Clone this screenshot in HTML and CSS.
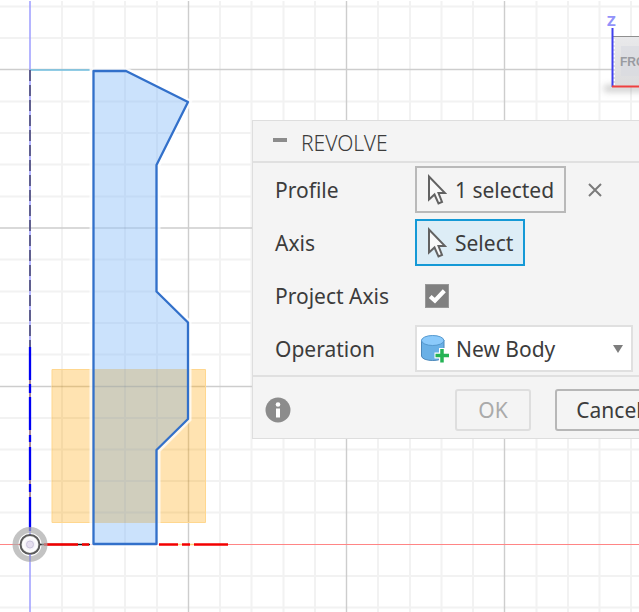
FILE: index.html
```html
<!DOCTYPE html>
<html lang="en">
<head>
<meta charset="utf-8">
<title>Revolve</title>
<link rel="stylesheet" href="styles.css">
</head>
<body>
<main class="viewport">
  <svg class="scene" aria-hidden="true">
    <defs>
      <linearGradient id="cube" x1="0" y1="0" x2="0" y2="1"><stop offset="0" stop-color="#e9e9eb"/><stop offset="1" stop-color="#dcdcdd"/></linearGradient>
      <filter id="soft" x="-20%" y="-200%" width="140%" height="500%"><feGaussianBlur stdDeviation="3"/></filter>
      <radialGradient id="origin"><stop offset="0" stop-color="#d9d4e8"/><stop offset=".3" stop-color="#eeeaf4"/><stop offset=".75" stop-color="#fff"/><stop offset="1" stop-color="#ccc"/></radialGradient>
    </defs>
    <path class="minor" d="M62 1V612M93.5 1V612M125 1V612M157 1V612M220 1V612M251.500 1V612M283.500 1V612M315 1V612M378 1V612M410 1V612M441.500 1V612M473 1V612M536.500 1V612M568 1V612M599.500 1V612M631 1V612"/>
    <path class="minor" d="M0 6.500H639M0 38H639M0 101.500H639M0 133H639M0 164.500H639M0 196.500H639M0 259.500H639M0 291.500H639M0 323H639M0 354.500H639M0 418H639M0 449.500H639M0 481H639M0 512.500H639M0 576H639M0 607.500H639"/>
    <path class="major" d="M188.500 1V612M346.500 1V612M504.500 1V612M0 69.500H639M0 228H639M0 386.500H639"/>
    <path d="M30 1V612" stroke="#9d9dff" stroke-width="1.500"/>
    <path d="M0 544.500H639" stroke="#ff8585"/>
    <path d="M30 70H90" stroke="#70bfe0" stroke-width="1.600"/>
    <path d="M30 70V348" stroke="#51517c" stroke-width="1.700" stroke-dasharray="11 4"/>
    <path d="M52 369.500H205.500V522.500H52Z" fill="#ffe3b1" stroke="#ffd78f"/>
    <path class="minor over" d="M62 370V522M93.500 370V522M125 370V522M157 370V522M52 418H205M52 449.500H205M52 481H205M52 512.500H205"/>
    <path class="major over" d="M188.500 370V522M52 386.500H205"/>
    <path d="M93 71H126L188 102L157 165V291.500L188 322.500V419L157 450V544H93Z" fill="none" stroke="#fff" stroke-opacity=".75" stroke-width="7"/>
    <path d="M93 71H126L188 102L157 165V291.500L188 322.500V419L157 450V544H93Z" fill="#cbe2fc"/>
    <path d="M93 369H188V419L157 450V523H93Z" fill="#d0cebd"/>
    <path d="M125 72V543M157 86V543M93 101.500H188M93 133H172M93 164.500H157M93 196.500H157M93 259.500H157M93 291.500H157M93 323H188M93 354.500H188M93 418H188M93 449.500H157M93 481H157M93 512.500H157" stroke="#6080a0" stroke-opacity=".08" stroke-width="2"/>
    <path d="M93 228H157M93 386.500H188" stroke="#536b80" stroke-opacity=".2" stroke-width="1.500"/>
    <path d="M30 347V380M30 384V393M30 397V430M30 435V442M30 447V480M30 484V492M30 497V531" stroke="#0000f5" stroke-width="2.300"/>
    <path d="M30 380V384M30 393V397M30 430V435M30 442V447M30 480V484M30 492V497" stroke="#a97976" stroke-width="1.500"/>
    <path d="M38 544.500H90" stroke="#151515" stroke-width="1.600"/>
    <path d="M44 544.500H78M82 544.500H89M159 544.500H178M182 544.500H190M194 544.500H228" stroke="#f30000" stroke-width="2.300"/>
    <path d="M178 544.500H182M190 544.500H194" stroke="#ffd27d" stroke-width="1.500"/>
    <path d="M93.500 71H126L188 102L156.500 165V291.500L188 322.500V419L156.500 450V544H93.500Z" fill="none" stroke="#3270ca" stroke-width="2.300" stroke-linejoin="round"/>
    <circle cx="30" cy="544.500" r="14.500" fill="none" stroke="#a9a9a9" stroke-opacity=".7" stroke-width="6"/>
    <circle cx="30" cy="544.500" r="9.500" fill="url(#origin)" stroke="#5b5b5b" stroke-width="2"/>
    <path d="M30 554V561" stroke="#8989df"/><circle cx="30" cy="544.500" r="3.500" fill="#e5deee" stroke="#cbc5dc"/>
    <path d="M604 85H650V92H604Z" fill="#777" opacity=".35" filter="url(#soft)"/>
    <path d="M613 37H660V87H613Z" fill="url(#cube)"/>
    <path d="M621 46H660V76H621Z" fill="#d7d9e0" opacity=".55"/>
    <path d="M613 36.500H660" stroke="#8f8f8f"/>
    <path d="M614 39V85" stroke="#fff" stroke-width="2" stroke-dasharray="2 2"/>
    <path d="M612.500 28V87" stroke="#4040ee" stroke-width="2"/>
    <path d="M612 86.500H660" stroke="#ef4040" stroke-width="2"/>
    <text class="axis-name" x="607" y="26">Z</text>
    <text class="cube-name" x="620" y="66">FRONT</text>
  </svg>

  <form class="panel">
    <header class="panel-head">
      <button class="collapse" type="button" aria-label="Collapse"></button>
      <h1 class="title">REVOLVE</h1>
    </header>
    <div class="fields">
      <div class="row">
        <label for="profile">Profile</label>
        <div class="control">
          <button class="pick" id="profile" type="button">
            <svg class="arrow" viewBox="0 0 20 32" aria-hidden="true"><path d="M2 2.500V25.500L7.500 20.500L11.500 29.500L15 28L11.500 19H18Z"/></svg>1 selected
          </button>
          <button class="clear" type="button" aria-label="Clear selection">
            <svg viewBox="0 0 14 14" aria-hidden="true"><path d="M1 1L13 13M13 1L1 13"/></svg>
          </button>
        </div>
      </div>
      <div class="row">
        <label for="axis">Axis</label>
        <div class="control">
          <button class="pick active" id="axis" type="button">
            <svg class="arrow" viewBox="0 0 20 32" aria-hidden="true"><path d="M2 2.500V25.500L7.500 20.500L11.500 29.500L15 28L11.500 19H18Z"/></svg>Select
          </button>
        </div>
      </div>
      <div class="row">
        <label for="project">Project Axis</label>
        <div class="control">
          <span class="tick"><input id="project" type="checkbox" checked><svg viewBox="0 0 23 23" aria-hidden="true"><path d="M5 12L9.500 16L18.500 6.500"/></svg></span>
        </div>
      </div>
      <div class="row">
        <label for="operation">Operation</label>
        <div class="control">
          <div class="choice">
            <select id="operation"><option>New Body</option></select>
            <svg class="body-icon" viewBox="0 0 30 30" aria-hidden="true">
              <path d="M1.500 6V22C2 28 23.500 28 24 22V6Z" fill="#69b0e6" stroke="#4d89bb"/>
              <ellipse cx="12.700" cy="6.500" rx="11.200" ry="5" fill="#8bcafb" stroke="#5599cf"/>
              <path d="M22 14V29M14.500 21.500H29.500" stroke="#fff" stroke-width="6"/>
              <path d="M22 15V28.500M15.500 21.500H29" stroke="#25b355" stroke-width="3.500"/>
            </svg>
            <svg class="caret" viewBox="0 0 10 8" aria-hidden="true"><path d="M0 0H10L5 8Z"/></svg>
          </div>
        </div>
      </div>
    </div>
    <footer class="actions">
      <button class="info" type="button" aria-label="Information">
        <svg viewBox="0 0 26 26" aria-hidden="true"><circle cx="13" cy="13" r="12.500" fill="#8c8c8c"/><circle cx="13" cy="7.500" r="2.300" fill="#fff"/><path d="M11 11.500H15V20.500H11Z" fill="#fff"/></svg>
      </button>
      <button class="action" type="submit" disabled>OK</button>
      <button class="action cancel" type="button">Cancel</button>
    </footer>
  </form>
</main>
</body>
</html>
```

FILE: styles.css
```css
* { box-sizing: border-box; }

body {
  margin: 0;
  background: #fff;
  color: #3c3c3c;
  font: 21px/28px "Noto Sans", sans-serif;
}

button, select, input { margin: 0; font: inherit; color: inherit; }
button { padding: 0; border: 0; background: none; }
svg { display: block; flex: none; }

.viewport { position: relative; min-height: 100vh; overflow: hidden; }
.scene { position: absolute; inset: 0; width: 100%; height: 100%; }
.minor { stroke: #f2f2f2; stroke-width: 2; fill: none; }
.major { stroke: #cdcdcd; stroke-width: 1.4; fill: none; }
.over { stroke: #806020; stroke-opacity: .08; }
.major.over { stroke-opacity: .25; }
.axis-name { font: 700 15px "Noto Sans", sans-serif; fill: #9292fa; }
.cube-name { font: 700 12px "Liberation Sans", sans-serif; fill: #999ba1; }

.panel {
  position: absolute;
  top: 120px;
  left: 252px;
  min-width: 436px;
  border: 1px solid #dedede;
  background: #f4f4f4;
}

.panel-head {
  display: flex;
  align-items: center;
  gap: 14px;
  height: 42px;
  padding: 4px 20px 0;
  border-bottom: 2px solid #e0e0e0;
}
.collapse { width: 14px; height: 4px; margin-bottom: 6px; background: #8c8c8c; }
.title { margin: 0; font-size: 21px; font-weight: 300; }

.fields {
  display: grid;
  gap: 6px;
  padding: 3px 20px 3px 22px;
  border-bottom: 2px solid #e0e0e0;
}
.row { display: grid; grid-template-columns: 140px 1fr; align-items: center; min-height: 47px; }
.control { display: flex; align-items: center; }

.pick {
  display: flex;
  align-items: center;
  gap: 8px;
  height: 47px;
  padding: 0 10px;
  border: 2px solid #b9b9b9;
}
.pick.active { border-color: #1499d6; background: #ddedf6; }
.arrow { width: 20px; height: 32px; fill: #f8f8f8; stroke: #626262; stroke-width: 2; }

.clear { margin-left: 22px; }
.clear svg { width: 14px; height: 14px; fill: none; stroke: #7b7b7b; stroke-width: 2; }

.tick { display: grid; margin-left: 10px; }
.tick input, .tick svg { grid-area: 1 / 1; width: 24px; height: 24px; }
.tick input { appearance: none; border: 1px solid #989898; background: #808080; }
.tick svg { fill: none; stroke: #fff; stroke-width: 4; pointer-events: none; }

.choice { display: grid; grid-template-columns: 218px; align-items: center; }
.choice > * { grid-area: 1 / 1; }
.choice select {
  appearance: none;
  height: 47px;
  padding: 0 39px;
  border: 2px solid #e0e0e0;
  border-radius: 0;
  background: #fff;
}
.choice svg { pointer-events: none; }
.body-icon { width: 30px; height: 30px; margin-left: 5px; }
.caret { justify-self: end; width: 10px; height: 8px; margin-right: 10px; fill: #7d7d7d; }

.actions { display: flex; align-items: center; height: 61px; padding: 4px 24px 0 12px; }
.info { margin-right: auto; }
.info svg { width: 26px; height: 26px; }
.action { width: 76px; height: 42px; border: 2px solid #b7b7b7; border-radius: 3px; }
.action:disabled { border-color: #dedede; color: #aaa; }
.cancel { width: 108px; margin-left: 24px; }
```
